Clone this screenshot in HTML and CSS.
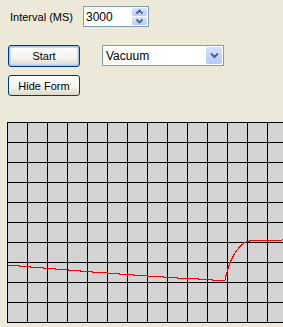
FILE: index.html
```html
<!DOCTYPE html>
<html>
<head>
<meta charset="utf-8">
<link rel="stylesheet" href="styles.css">
</head>
<body>
<div class="form">
  <div class="row row-interval">
    <label class="label">Interval (MS)</label>
    <div class="spin">
      <span class="spin-value">3000</span>
      <div class="spin-buttons">
        <svg class="spin-btn" width="15" height="8" viewBox="0 0 15 8"><path d="M4.5 5.5 L7.5 2.5 L10.5 5.5" fill="none" stroke="#4d6185" stroke-width="1.8"/></svg>
        <svg class="spin-btn" width="15" height="8" viewBox="0 0 15 8"><path d="M4.5 2.5 L7.5 5.5 L10.5 2.5" fill="none" stroke="#4d6185" stroke-width="1.8"/></svg>
      </div>
    </div>
  </div>
  <div class="row row-start">
    <button class="btn btn-default">Start</button>
    <div class="combo">
      <span class="combo-value">Vacuum</span>
      <span class="combo-btn"><svg width="9" height="7" viewBox="0 0 9 7"><path d="M1 1.5 L4.5 5 L8 1.5" fill="none" stroke="#4d6185" stroke-width="2"/></svg></span>
    </div>
  </div>
  <div class="row row-hide">
    <button class="btn">Hide Form</button>
  </div>
</div>
<div class="chart">
  <svg width="276" height="201" viewBox="7 122 276 201" shape-rendering="crispEdges">
    <rect x="7" y="122" width="276" height="201" fill="#d3d3d3"/>
    <g stroke="#000" stroke-width="1">
      <path d="M7.5 122 V323 M27.5 122 V323 M47.5 122 V323 M67.5 122 V323 M87.5 122 V323 M107.5 122 V323 M127.5 122 V323 M147.5 122 V323 M167.5 122 V323 M187.5 122 V323 M207.5 122 V323 M227.5 122 V323 M247.5 122 V323 M267.5 122 V323"/>
      <path d="M7 122.5 H283 M7 142.5 H283 M7 162.5 H283 M7 182.5 H283 M7 202.5 H283 M7 222.5 H283 M7 242.5 H283 M7 262.5 H283 M7 282.5 H283 M7 302.5 H283 M7 322.5 H283"/>
    </g>
    <polyline fill="none" stroke="#ff0000" stroke-width="1" points="8,265.5 19,265.5 19,266.5 30,266.5 30,267.5 43,267.5 43,268.5 55,268.5 55,269.5 68,269.5 68,270.5 80,270.5 80,271.5 92,271.5 92,272.5 107,272.5 107,273.5 119,273.5 119,274.5 133,274.5 133,275.5 147,275.5 147,276.5 163,276.5 163,277.5 177,277.5 177,278.5 198,278.5 198,279.5 212,279.5 212,280.5 225,280.5 226,275.5 228,268.5 230,262.5 232,258.5 234,254.5 236,251.5 239,247.5 242,244.5 245,242.5 247,241.5 252,240.5 281,240.5 283,239.5"/>
  </svg>
</div>
</body>
</html>
```
FILE: styles.css
```css
html, body {
  margin: 0;
  padding: 0;
}
body {
  background: #ece9d8;
  font-family: "Liberation Sans", Arial, sans-serif;
  font-size: 11px;
  color: #000;
  width: 283px;
  height: 327px;
  overflow: hidden;
}
.form {
  padding: 6px 0 0 8px;
}
.row {
  display: flex;
  align-items: center;
}
.label {
  width: 75px;
  padding-left: 2px;
  box-sizing: border-box;
}
.spin {
  width: 66px;
  height: 21px;
  box-sizing: border-box;
  border: 1px solid #7f9db9;
  background: #fff;
  display: flex;
  align-items: center;
  justify-content: space-between;
  padding: 1px 1px 1px 2px;
}
.spin-value {
  font-size: 12px;
}
.spin-buttons {
  display: flex;
  flex-direction: column;
  gap: 1px;
}
.spin-btn {
  display: block;
  background: linear-gradient(#d6e3fc, #b9cdf8);
  border-radius: 2px;
}
.row-start {
  margin-top: 18px;
  align-items: flex-start;
}
.btn {
  width: 72px;
  height: 22px;
  box-sizing: border-box;
  border: 1px solid #003c74;
  border-radius: 3px;
  background: linear-gradient(#ffffff 0%, #f4f3ee 60%, #dcd8c9 100%);
  font-family: "Liberation Sans", Arial, sans-serif;
  font-size: 11px;
  color: #000;
  padding: 0;
  margin: 0;
}
.btn-default {
  box-shadow: inset 0 0 0 1px #a6c0ec, inset 0 0 0 2px #c7d8f6;
}
.combo {
  margin-left: 22px;
  width: 122px;
  height: 21px;
  box-sizing: border-box;
  border: 1px solid #7f9db9;
  background: #fff;
  display: flex;
  align-items: center;
  justify-content: space-between;
  padding: 1px;
}
.combo-value {
  padding-left: 2px;
  font-size: 12px;
}
.combo-btn {
  width: 16px;
  height: 17px;
  border-radius: 2px;
  background: linear-gradient(#d6e3fc, #b4c9f6);
  display: flex;
  align-items: center;
  justify-content: center;
}
.combo-btn svg {
  display: block;
}
.row-hide {
  margin-top: 8px;
}
.row-hide .btn {
  height: 21px;
}
.chart {
  margin-top: 26px;
  padding-left: 7px;
  line-height: 0;
}
.chart svg {
  display: block;
}
```
